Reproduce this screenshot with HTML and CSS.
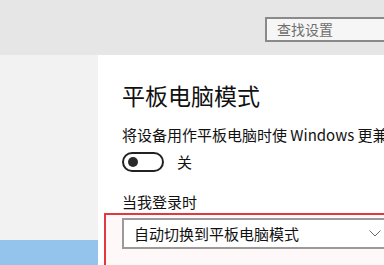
FILE: index.html
```html
<!DOCTYPE html>
<html lang="zh-CN">
<head>
<meta charset="utf-8">
<link rel="stylesheet" href="styles.css">
</head>
<body>
<div class="top">
  <div class="search">查找设置</div>
</div>
<div class="main">
  <div class="sidebar">
    <div class="nav-active"></div>
  </div>
  <div class="content">
    <h1 class="title">平板电脑模式</h1>
    <p class="desc">将设备用作平板电脑时使 Windows 更兼容触控</p>
    <div class="toggle-row">
      <span class="toggle"><span class="knob"></span></span>
      <span class="toggle-label">关</span>
    </div>
    <p class="label">当我登录时</p>
    <div class="highlight">
      <div class="select">
        <span class="select-text">自动切换到平板电脑模式</span>
        <svg class="chev" width="12" height="7" viewBox="0 0 12 7"><path d="M0.5 0.5 L6 6 L11.5 0.5" fill="none" stroke="#6b6b6b" stroke-width="1"/></svg>
      </div>
    </div>
  </div>
</div>
</body>
</html>
```
FILE: styles.css
```css
html, body {
  margin: 0;
  padding: 0;
  width: 384px;
  height: 265px;
  overflow: hidden;
  background: #ffffff;
  font-family: "Noto Sans CJK SC", "Microsoft YaHei", sans-serif;
  color: #000;
}
.top {
  height: 55px;
  background: #e6e6e6;
  box-sizing: border-box;
  padding: 17px 0 0 265px;
  display: flex;
}
.search {
  flex: none;
  width: 140px;
  height: 25px;
  box-sizing: border-box;
  border: 2px solid #8a8a8a;
  background: #f6f6f6;
  color: #6e6e6e;
  font-size: 14px;
  line-height: 21px;
  padding-left: 10px;
}
.main {
  display: flex;
  height: 210px;
}
.sidebar {
  width: 98px;
  flex: none;
  background: #f2f2f2;
  display: flex;
  flex-direction: column;
  justify-content: flex-end;
}
.nav-active {
  height: 25px;
  background: #94c3eb;
}
.content {
  flex: 1;
  padding: 25px 0 0 24px;
  min-width: 0;
}
.title {
  margin: 0;
  font-size: 23px;
  font-weight: 400;
  line-height: 30px;
  color: #111;
  white-space: nowrap;
}
.desc {
  margin: 14px 0 0;
  font-size: 15px;
  line-height: 22px;
  white-space: nowrap;
  color: #111;
}
.toggle-row {
  margin-top: 6px;
  display: flex;
  align-items: center;
  height: 20px;
}
.toggle {
  width: 42px;
  height: 20px;
  box-sizing: border-box;
  border: 2px solid #222;
  border-radius: 10px;
  display: flex;
  align-items: center;
  padding-left: 4px;
}
.knob {
  width: 10px;
  height: 10px;
  border-radius: 50%;
  background: #2a2a2a;
}
.toggle-label {
  margin-left: 13px;
  font-size: 15px;
  line-height: 20px;
  color: #111;
}
.label {
  margin: 19px 0 0;
  font-size: 15px;
  line-height: 22px;
  color: #111;
}
.highlight {
  margin: 0 0 0 -18px;
  width: 320px;
  border: 2px solid #e03a40;
  padding: 3px 0 20px 16px;
  background: #fff8f8;
}
.select {
  width: 272px;
  height: 31px;
  box-sizing: border-box;
  border: 2px solid #9a9a9a;
  background: #fff;
  display: flex;
  align-items: center;
  justify-content: space-between;
  padding: 0 11px 0 10px;
}
.select-text {
  font-size: 15px;
  line-height: 20px;
  color: #111;
}
.chev {
  flex: none;
}
```
